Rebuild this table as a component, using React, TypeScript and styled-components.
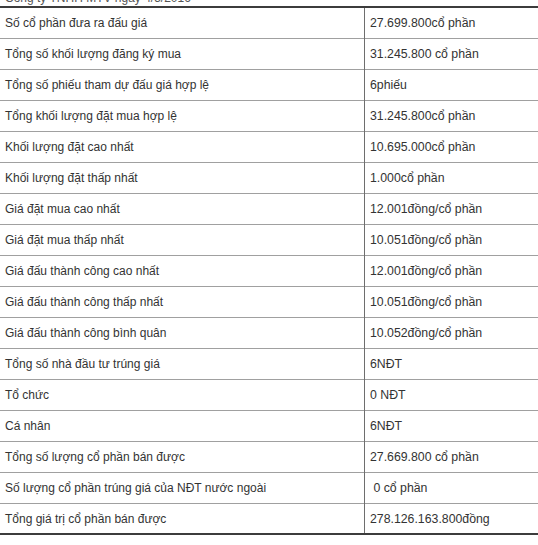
import React from 'react';
import styled, { createGlobalStyle } from 'styled-components';

const GlobalStyle = createGlobalStyle`
  html, body {
    margin: 0;
    padding: 0;
    background: #ffffff;
  }
  body {
    font-family: "Liberation Sans", Arial, sans-serif;
    overflow: hidden;
  }
`;

const Page = styled.div`
  width: 538px;
  height: 545px;
  overflow: hidden;
  background: #ffffff;
`;

const Caption = styled.div`
  margin-top: -10px;
  height: 16px;
  padding-left: 5px;
  font-size: 12px;
  line-height: 16px;
  color: #555;
  white-space: nowrap;
`;

const Table = styled.table`
  width: 538px;
  border-collapse: collapse;
  table-layout: fixed;
  border-top: 2px solid #3c3c3c;
  border-bottom: 2px solid #3c3c3c;
`;

const Row = styled.tr`
  height: 31px;
  border-top: 1px solid #a0a0a0;

  &:first-child {
    border-top: none;
  }
`;

interface ICellProps {
  $isValue?: boolean;
}

const Cell = styled.td<ICellProps>`
  padding: 1px 0 0 5px;
  width: ${(props) => (props.$isValue ? '174px' : '359px')};
  font-size: ${(props) => (props.$isValue ? '12.3px' : '12px')};
  color: #333333;
  vertical-align: middle;
  white-space: nowrap;
  border-left: ${(props) => (props.$isValue ? '1px solid #6e6e6e' : 'none')};
`;

const rows: [string, string][] = [
  ['Số cổ phần đưa ra đấu giá', '27.699.800cổ phần'],
  ['Tổng số khối lượng đăng ký mua', '31.245.800 cổ phần'],
  ['Tổng số phiếu tham dự đấu giá hợp lệ', '6phiếu'],
  ['Tổng khối lượng đặt mua hợp lệ', '31.245.800cổ phần'],
  ['Khối lượng đặt cao nhất', '10.695.000cổ phần'],
  ['Khối lượng đặt thấp nhất', '1.000cổ phần'],
  ['Giá đặt mua cao nhất', '12.001đồng/cổ phần'],
  ['Giá đặt mua thấp nhất', '10.051đồng/cổ phần'],
  ['Giá đấu thành công cao nhất', '12.001đồng/cổ phần'],
  ['Giá đấu thành công thấp nhất', '10.051đồng/cổ phần'],
  ['Giá đấu thành công bình quân', '10.052đồng/cổ phần'],
  ['Tổng số nhà đầu tư trúng giá', '6NĐT'],
  ['Tổ chức', '0 NĐT'],
  ['Cá nhân', '6NĐT'],
  ['Tổng số lượng cổ phần bán được', '27.669.800 cổ phần'],
  ['Số lượng cổ phần trúng giá của NĐT nước ngoài', '\u00a00 cổ phần'],
  ['Tổng giá trị cổ phần bán được', '278.126.163.800đồng'],
];

const App = (): React.ReactElement => {
  return (
    <Page>
      <GlobalStyle />
      <Caption>Công ty TNHH MTV ngày 4/5/2016</Caption>
      <Table>
        <tbody>
          {rows.map(([label, value]) => (
            <Row key={label}>
              <Cell>{label}</Cell>
              <Cell $isValue>{value}</Cell>
            </Row>
          ))}
        </tbody>
      </Table>
    </Page>
  );
};

export default App;
